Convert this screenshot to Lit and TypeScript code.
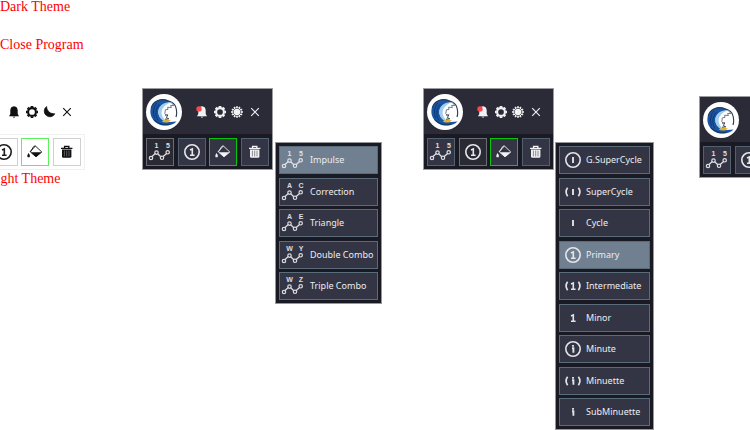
import { LitElement, html, svg, css } from "lit";
import { customElement, property } from "lit/decorators.js";
import { classMap } from "lit/directives/class-map.js";

const wave = (left: string, right: string) => html`
  <svg viewBox="0 0 28 28" width="28" height="28" aria-hidden="true" fill="none" stroke="currentColor" opacity=".9">
    <path d="M6 18.6 9.3 15.6M11.7 15.8 14.8 18.7M17.2 18.5 20.6 15.4" stroke-width="1.3" />
    <circle cx="5" cy="20" r="1.7" stroke-width="1.2" />
    <circle cx="10.5" cy="14.6" r="1.7" stroke-width="1.2" />
    <circle cx="16" cy="19.8" r="1.7" stroke-width="1.2" />
    <circle cx="21.7" cy="14.3" r="1.7" stroke-width="1.2" />
    <g fill="currentColor" stroke="none" font-family="Liberation Sans, sans-serif" font-weight="700" font-size="7" text-anchor="middle">
      <text x="10.5" y="9.5">${left}</text>
      <text x="22" y="9.5">${right}</text>
    </g>
  </svg>`;

const glyphs: Record<string, unknown> = {
  bar: svg`<path d="M14 11v6" stroke-width="1.9" />`,
  one: svg`<path d="M12 12 14.3 11v6M12 17.2h4.6" stroke-width="1.6" />`,
  i: svg`<path d="M13 13.2h1.4v4.6M14 10v1.7" stroke-width="1.9" />`,
};
const frames: Record<string, unknown> = {
  ring: svg`<circle cx="14" cy="14" r="7.2" stroke-width="1.6" />`,
  paren: svg`<path d="M8.6 9.8q-3 4.2 0 8.4M19.4 9.8q3 4.2 0 8.4" stroke-width="1.7" />`,
  none: "",
};
const degree = (glyph: string, frame: string) => html`
  <svg viewBox="0 0 28 28" width="28" height="28" aria-hidden="true" fill="none" stroke="currentColor" opacity=".95">
    ${frames[frame]}${glyphs[glyph]}
  </svg>`;

const bucket = html`
  <svg viewBox="0 0 28 28" width="28" height="28" aria-hidden="true">
    <path d="M12.6 8.6 14.2 7.8 20.8 14 15 18.8 9.4 14Z" fill="none" stroke="currentColor" stroke-width=".9" />
    <path d="M14.4 8 9 13.8" fill="none" stroke="currentColor" stroke-width=".9" />
    <path d="M9.8 14.3H20.4L15 18.9Z" fill="currentColor" />
    <path d="M7.6 15Q5.9 17.4 6.3 18.4A1.4 1.4 0 0 0 8.9 18.4Q9.3 17.4 7.6 15Z" fill="currentColor" />
  </svg>`;

const trash = html`
  <svg viewBox="0 0 28 28" width="28" height="28" aria-hidden="true" fill="none" stroke="currentColor">
    <path d="M8 10.4H19.4M11.6 10V8.4H15.8V10" stroke-width="1.4" />
    <path d="M9 11.6H18.4V18.4Q18.4 19.8 17 19.8H10.4Q9 19.8 9 18.4Z" fill="currentColor" stroke="none" />
    <path class="slots" d="M11.4 12.6V18.4M13.7 12.6V18.4M16 12.6V18.4" stroke-width=".8" />
  </svg>`;

const bell = (alert: boolean) => html`
  <svg viewBox="0 0 14 14" width="14" height="14" aria-hidden="true">
    <path d="M7 1.2C9.6 1.4 10.7 3.2 10.7 5.6V9L12 11.2H2L3.3 9V5.6C3.3 3.2 4.4 1.4 7 1.2ZM5.6 11.7H8.4Q7 13.4 5.6 11.7Z" fill="currentColor" />
    ${alert ? svg`<circle cx="4" cy="3.9" r="2.7" fill="#f9474d" />` : ""}
  </svg>`;

const spokes = (n: number, from: number, to: number, width: number) =>
  Array.from({ length: n }, (_, k) => svg`<path d="M7 ${7 - from}V${7 - to}" stroke-width=${width} transform="rotate(${(360 / n) * k} 7 7)" />`);

const gear = html`
  <svg viewBox="0 0 14 14" width="14" height="14" aria-hidden="true" fill="none" stroke="currentColor">
    <circle cx="7" cy="7" r="3.9" stroke-width="2.1" />${spokes(8, 4.4, 6, 2.7)}
  </svg>`;

const sun = html`
  <svg viewBox="0 0 14 14" width="14" height="14" aria-hidden="true" fill="none" stroke="currentColor">
    <circle cx="7" cy="7" r="3.3" fill="currentColor" stroke="none" />
    <circle cx="7" cy="7" r="4.4" stroke-width="1" />${spokes(12, 4.6, 6, 1.3)}
  </svg>`;

const moon = html`
  <svg viewBox="0 0 14 14" width="14" height="14" aria-hidden="true">
    <path d="M4.6 1.6A5.6 5.6 0 1 0 12.8 8.8C9 9.2 4.6 6.4 4.6 1.6Z" fill="currentColor" stroke="currentColor" stroke-width=".8" />
  </svg>`;

const cross = html`
  <svg viewBox="0 0 14 14" width="14" height="14" aria-hidden="true">
    <path d="M3.2 3.2 10.8 10.8M10.8 3.2 3.2 10.8" stroke="currentColor" stroke-width="1.1" />
  </svg>`;

const logo = html`
  <svg class="logo" viewBox="0 0 36 36" width="36" height="36" role="img" aria-label="Wave logo">
    <circle cx="18" cy="18" r="18" fill="#fff" />
    <path d="M25.5 8.2C18 3 8.5 5.5 5.3 12.5C2 21 8 30.5 17.5 31.5C23 32 28 30.5 30.5 27.5L24 28C16 28 11.5 22.5 12.6 16.5C13.6 11.5 19 8.6 25.5 8.2Z" fill="#1a55a4" />
    <path d="M25.5 8.2C19 7.6 12.8 11 12.2 17C11.8 23 16.8 28.2 23 28.4C17.6 26 14.8 21.4 15.8 16.8C16.8 12.6 20.6 9.6 25.5 8.2Z" fill="#9fcdec" />
    <path d="M5.3 14C6.6 7.4 14.6 3.4 22.6 7C25.5 8 28 8.4 29.6 12.6C30.8 16 31 20 30 23" fill="none" stroke="#263a52" stroke-width="1.1" />
    <path d="M25.8 9.2 28 11.6 24.6 11.4 25.4 13.6 21.6 13.2 22 15.4 19.4 15.8 18.8 19.6 20.6 21.4" fill="none" stroke="#4c6076" stroke-width=".8" />
    <path d="M8.6 24C6.6 19 7.2 13 11 9M12 26.6C8.8 21.6 9.2 14.8 13.4 10.2" fill="none" stroke="#0e2e63" stroke-width=".8" />
    <path d="M7.6 25.4C11.4 29.8 17 31.6 24 30.2" fill="none" stroke="#12386f" stroke-width="1.1" />
    <path d="M15.6 27.2C18.4 29.2 22.4 28.6 25 26.4L20.4 25.6Z" fill="#e2b128" />
    <path d="M19 21.2 21.8 20.8 20.4 23.6 22.8 24.8 19 25.2" stroke="#2c3540" stroke-width=".9" fill="none" />
  </svg>`;

@customElement("wave-toolbar")
class WaveToolbar extends LitElement {
  @property() theme = "dark";
  @property() open = "";

  static styles = css`
    :host { display: block; flex: none; width: 131px; }
    .panel { box-sizing: border-box; border: 1px solid #9c9ca0; background: #2b2b38; color: #f2f2f4; }
    .head { display: flex; align-items: center; height: 45px; padding: 0 10px 0 3px; }
    .logo { flex: none; margin-right: 13px; }
    .icons { display: flex; flex: 1; justify-content: space-between; }
    button { display: flex; align-items: center; justify-content: center; margin: 0; padding: 0; border: 0; background: none; color: inherit; }
    .tools { display: flex; justify-content: space-between; padding: 4px 3px 3px; background: #191a23; }
    .tools button { box-sizing: border-box; width: 28px; height: 28px; border: 1px solid #52606f; background: #343544; }
    .tools svg { flex: none; }
    .slots { stroke: #6d6e79; }
    .tools .open { border-color: #6c6d72; background: #2a2a35; }
    .tools .fill { border-color: #08c80c; }
    .light { border-color: transparent; background: #fff; color: #111; }
    .light .tools { margin: 0 -1px -1px; padding: 4px; background: #fff; box-shadow: inset 0 0 0 1px #f1f1f1; }
    .light .tools button { border-color: #d0d0d0; background: #fff; }
    .light .tools .fill { border-color: #5df25d; }
  `;

  render() {
    const light = this.theme === "light";
    return html`
      <div class=${classMap({ panel: true, light })}>
        <div class="head">
          ${logo}
          <div class="icons">
            <button aria-label="Notifications">${bell(!light)}</button>
            <button aria-label="Settings">${gear}</button>
            <button aria-label="Switch theme">${light ? moon : sun}</button>
            <button aria-label="Close program">${cross}</button>
          </div>
        </div>
        <div class="tools">
          <button class=${classMap({ open: this.open === "pattern" })} aria-label="Pattern">${wave("1", "5")}</button>
          <button class=${classMap({ open: this.open === "degree" })} aria-label="Degree">${degree("one", "ring")}</button>
          <button class="fill" aria-label="Colour">${bucket}</button>
          <button aria-label="Delete">${trash}</button>
        </div>
      </div>`;
  }
}

interface Item { label: string; icon: unknown; }

@customElement("wave-menu")
class WaveMenu extends LitElement {
  @property({ attribute: false }) items: Item[] = [];
  @property() selected = "";
  @property({ type: Boolean }) compact = false;

  static styles = css`
    :host { display: block; flex: none; }
    ul { display: grid; grid-template-columns: minmax(0, 1fr); align-content: space-between; box-sizing: border-box; margin: 0; padding: 3px; list-style: none; border: 1px solid #97979b; background: #191a23; }
    .patterns { width: 107px; height: 162px; }
    .degrees { width: 99px; height: 288px; }
    button { display: flex; align-items: center; box-sizing: border-box; width: 100%; height: 28px; margin: 0; padding: 0; gap: 3px; border: 1px solid #5a6b79; background: #343544; color: #ececf0; font: 9px/14px "Noto Sans", "Open Sans", sans-serif; white-space: nowrap; }
    .degrees button { gap: 0; }
    svg { flex: none; margin: 0 -1px; }
    .patterns svg { margin-right: 0; }
    .selected { background: #708090; }
  `;

  render() {
    return html`
      <ul class=${this.compact ? "degrees" : "patterns"}>
        ${this.items.map((it) => html`
          <li><button class=${classMap({ selected: it.label === this.selected })}>${it.icon}<span>${it.label}</span></button></li>`)}
      </ul>`;
  }
}

const patterns: Item[] = [
  { label: "Impulse", icon: wave("1", "5") },
  { label: "Correction", icon: wave("A", "C") },
  { label: "Triangle", icon: wave("A", "E") },
  { label: "Double Combo", icon: wave("W", "Y") },
  { label: "Triple Combo", icon: wave("W", "Z") },
];

const degrees: Item[] = [
  { label: "G.SuperCycle", icon: degree("bar", "ring") },
  { label: "SuperCycle", icon: degree("bar", "paren") },
  { label: "Cycle", icon: degree("bar", "none") },
  { label: "Primary", icon: degree("one", "ring") },
  { label: "Intermediate", icon: degree("one", "paren") },
  { label: "Minor", icon: degree("one", "none") },
  { label: "Minute", icon: degree("i", "ring") },
  { label: "Minuette", icon: degree("i", "paren") },
  { label: "SubMinuette", icon: degree("i", "none") },
];

@customElement("app-root")
class AppRoot extends LitElement {
  static styles = css`
    :host { display: block; overflow: hidden; background: #fff; }
    main { display: flex; align-items: flex-start; min-height: 430px; }
    .notes { flex: none; width: 131px; margin-left: -46px; color: #f00; font: 14px/14px "Liberation Serif", serif; }
    .notes p { margin: 0; white-space: nowrap; }
    .top { display: grid; align-content: start; gap: 24px; box-sizing: border-box; height: 88px; margin-left: 46px; }
    .notes .caption { margin-left: 34px; line-height: 18px; }
    .group { display: flex; flex: none; padding-top: 88px; }
    .group wave-menu { margin-top: 54px; }
    .first { gap: 2px; margin-left: 57px; }
    .second { gap: 1px; margin-left: 41px; }
    .third { margin-left: 45px; padding-top: 96px; }
  `;

  render() {
    return html`
      <main>
        <section class="notes">
          <div class="top"><p>Dark Theme</p><p>Close Program</p></div>
          <wave-toolbar theme="light"></wave-toolbar>
          <p class="caption">Light Theme</p>
        </section>
        <section class="group first">
          <wave-toolbar open="pattern"></wave-toolbar>
          <wave-menu .items=${patterns} selected="Impulse"></wave-menu>
        </section>
        <section class="group second">
          <wave-toolbar open="degree"></wave-toolbar>
          <wave-menu compact .items=${degrees} selected="Primary"></wave-menu>
        </section>
        <section class="group third">
          <wave-toolbar></wave-toolbar>
        </section>
      </main>`;
  }
}
